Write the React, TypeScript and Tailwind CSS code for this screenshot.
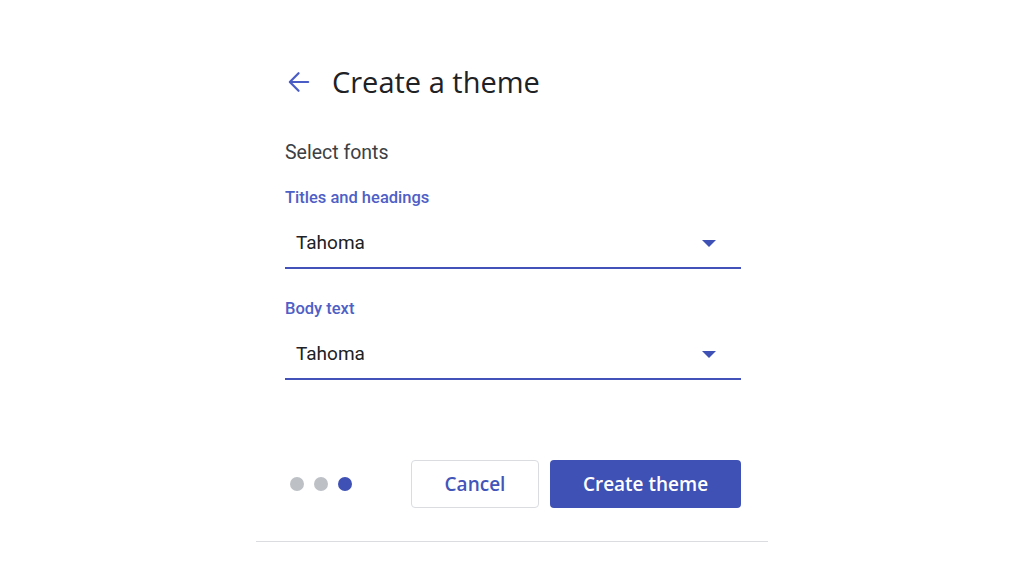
type FontField = {
  label: string;
  value: string;
};

const fields: FontField[] = [
  { label: "Titles and headings", value: "Tahoma" },
  { label: "Body text", value: "Tahoma" },
];

function BackArrow() {
  return (
    <svg width="24" height="22" viewBox="0 0 24 22" fill="none" stroke="#4a5cc6" strokeWidth="2.4" strokeLinecap="round" strokeLinejoin="round">
      <path d="M22 11H2.5" />
      <path d="M11.5 1.5 2 11l9.5 9.5" />
    </svg>
  );
}

function DropArrow() {
  return (
    <svg width="14" height="7" viewBox="0 0 14 7">
      <polygon points="0,0 14,0 7,7" fill="#3f51b5" />
    </svg>
  );
}

function FontSelect({ label, value }: FontField) {
  return (
    <div>
      <p className="h-5 text-[16.5px] font-medium leading-5 text-[#4e60c6]">{label}</p>
      <div className="mt-3 flex h-[49px] items-center justify-between border-b-2 border-[#4352b8] pl-[11px] pr-[25px]">
        <span className="text-[19px] text-[#202124]">{value}</span>
        <DropArrow />
      </div>
    </div>
  );
}

export default function App() {
  return (
    <div className="flex h-[576px] w-full justify-center bg-white font-['Roboto',sans-serif]">
      <div className="mt-[30px] h-[512px] w-[512px] border-b border-[#dadce0] bg-white pl-[29px] pr-[27px] pt-[32px]">
        <div className="flex h-10 items-center">
          <div className="ml-[3px] flex w-[22px] items-center">
            <BackArrow />
          </div>
          <h1 className="ml-[22px] font-['Open_Sans',sans-serif] text-[29px] text-[#202124]">Create a theme</h1>
        </div>

        <p className="mt-[39px] h-6 text-[19.5px] leading-6 text-[#3c4043]">Select fonts</p>

        <div className="mt-[23px] space-y-[30px]">
          {fields.map((field) => (
            <FontSelect key={field.label} label={field.label} value={field.value} />
          ))}
        </div>

        <div className="mt-[80px] flex items-center justify-between">
          <div className="ml-[5px] flex gap-[10px]">
            <span className="h-[14px] w-[14px] rounded-full bg-[#bdc1c6]" />
            <span className="h-[14px] w-[14px] rounded-full bg-[#bdc1c6]" />
            <span className="h-[14px] w-[14px] rounded-full bg-[#3f51b5]" />
          </div>
          <div className="flex gap-[11px]">
            <button type="button" className="h-12 w-[128px] rounded border border-[#dadce0] bg-white font-['Open_Sans',sans-serif] text-[19px] font-semibold text-[#4355b9]">
              Cancel
            </button>
            <button type="button" className="h-12 w-[191px] rounded bg-[#3f51b5] font-['Open_Sans',sans-serif] text-[19px] font-semibold text-white">
              Create theme
            </button>
          </div>
        </div>
      </div>
    </div>
  );
}
